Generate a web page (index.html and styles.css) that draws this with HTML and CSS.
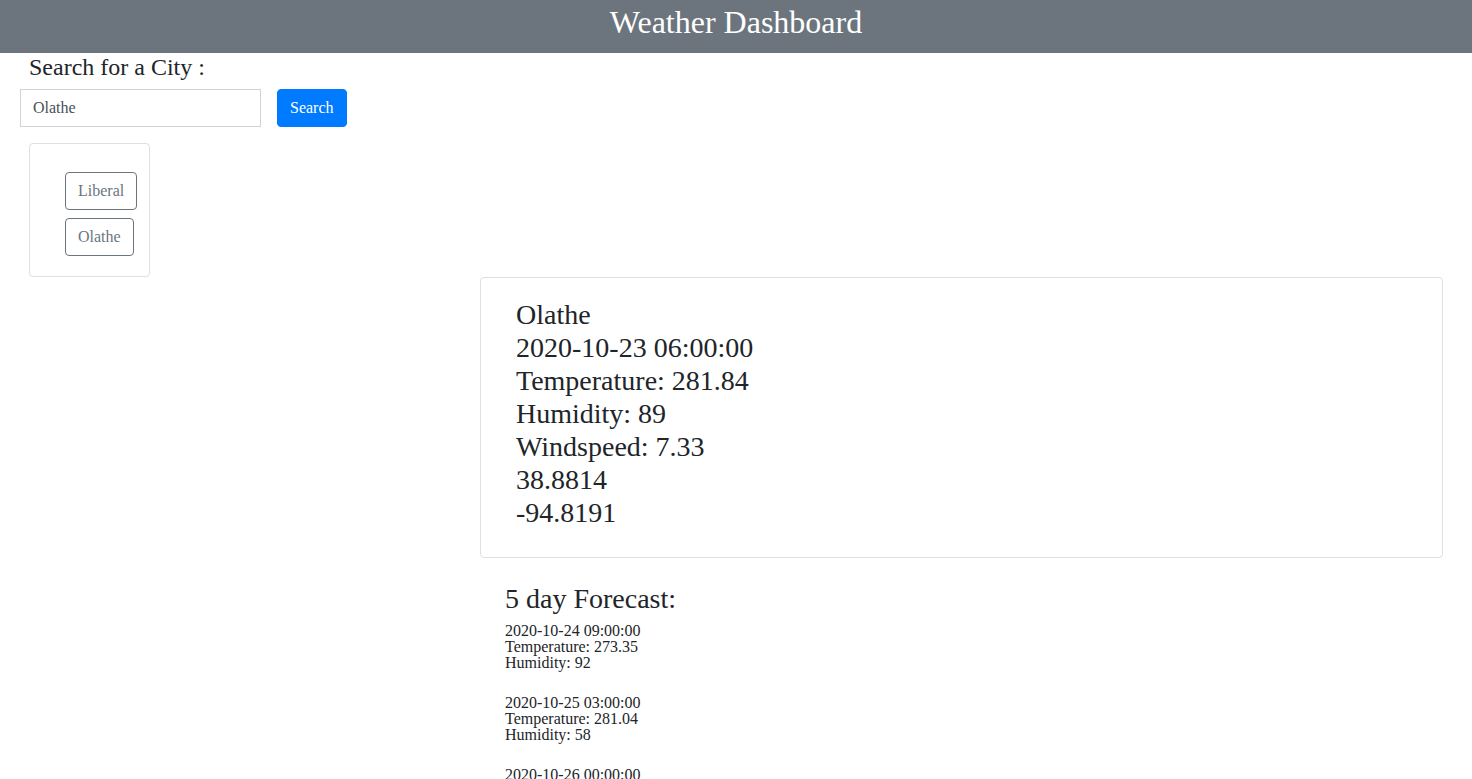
FILE: index.html
```html
<!DOCTYPE html>
<html lang="en">
<head>
<meta charset="utf-8">
<title>Weather Dashboard</title>
<link rel="stylesheet" href="styles.css">
</head>
<body>
<header class="topbar">
  <h1 class="title">Weather Dashboard</h1>
</header>
<section class="search-area">
  <div class="search-label">Search for a City :</div>
  <div class="search-row">
    <input class="city-input" type="text" value="Olathe">
    <button class="search-btn" type="button">Search</button>
  </div>
  <div class="history-card">
    <button class="history-btn" type="button">Liberal</button>
    <button class="history-btn" type="button">Olathe</button>
  </div>
</section>
<main class="results">
  <div class="current-card">
    <div class="current-line">Olathe</div>
    <div class="current-line">2020-10-23 06:00:00</div>
    <div class="current-line">Temperature: 281.84</div>
    <div class="current-line">Humidity: 89</div>
    <div class="current-line">Windspeed: 7.33</div>
    <div class="current-line">38.8814</div>
    <div class="current-line">-94.8191</div>
  </div>
  <div class="forecast">
    <div class="forecast-title">5 day Forecast:</div>
    <div class="forecast-item">
      <div>2020-10-24 09:00:00</div>
      <div>Temperature: 273.35</div>
      <div>Humidity: 92</div>
    </div>
    <div class="forecast-item">
      <div>2020-10-25 03:00:00</div>
      <div>Temperature: 281.04</div>
      <div>Humidity: 58</div>
    </div>
    <div class="forecast-item">
      <div>2020-10-26 00:00:00</div>
      <div>Temperature: 279.61</div>
      <div>Humidity: 64</div>
    </div>
  </div>
</main>
</body>
</html>
```
FILE: styles.css
```css
html, body {
  margin: 0;
  padding: 0;
}
body {
  font-family: "Liberation Serif", "Times New Roman", serif;
  color: #212529;
  background: #fff;
  font-size: 16px;
}
.topbar {
  background: #6c757d;
  height: 53px;
  box-sizing: border-box;
  padding-top: 3px;
  text-align: center;
}
.title {
  margin: 0;
  font-size: 32px;
  font-weight: 400;
  line-height: 38.4px;
  color: #fff;
}
.search-area {
  padding-left: 20px;
}
.search-label {
  margin-left: 9px;
  font-size: 24px;
  line-height: 28.8px;
  margin-bottom: 7px;
}
.search-row {
  display: flex;
  gap: 16px;
  align-items: center;
}
.city-input {
  box-sizing: border-box;
  width: 241px;
  height: 38px;
  border: 1px solid #ced4da;
  border-radius: 0;
  padding: 0 12px;
  font-family: inherit;
  font-size: 16px;
  color: #495057;
  background: #fff;
  outline: none;
}
.search-btn {
  box-sizing: border-box;
  height: 38px;
  padding: 0 12px;
  border: 1px solid #007bff;
  border-radius: 4px;
  background: #007bff;
  color: #fff;
  font-family: inherit;
  font-size: 16px;
  line-height: 24px;
}
.history-card {
  margin: 16px 0 0 9px;
  box-sizing: border-box;
  width: 121px;
  border: 1px solid rgba(0, 0, 0, 0.125);
  border-radius: 4px;
  padding: 28px 12px 20px 35px;
  display: flex;
  flex-direction: column;
  align-items: flex-start;
  gap: 8px;
}
.history-btn {
  box-sizing: border-box;
  height: 38px;
  padding: 0 12px;
  border: 1px solid #6c757d;
  border-radius: 4px;
  background: #fff;
  color: #6c757d;
  font-family: inherit;
  font-size: 16px;
  line-height: 24px;
}
.results {
  padding: 0 29px 0 480px;
}
.current-card {
  border: 1px solid rgba(0, 0, 0, 0.125);
  border-radius: 4px;
  padding: 20px 20px 28px 35px;
}
.current-line {
  font-size: 28px;
  line-height: 33px;
}
.forecast {
  padding: 24px 0 0 25px;
}
.forecast-title {
  font-size: 28px;
  line-height: 33px;
  margin-bottom: 8px;
}
.forecast-item {
  font-size: 16px;
  line-height: 16px;
  margin-bottom: 24px;
}
```
